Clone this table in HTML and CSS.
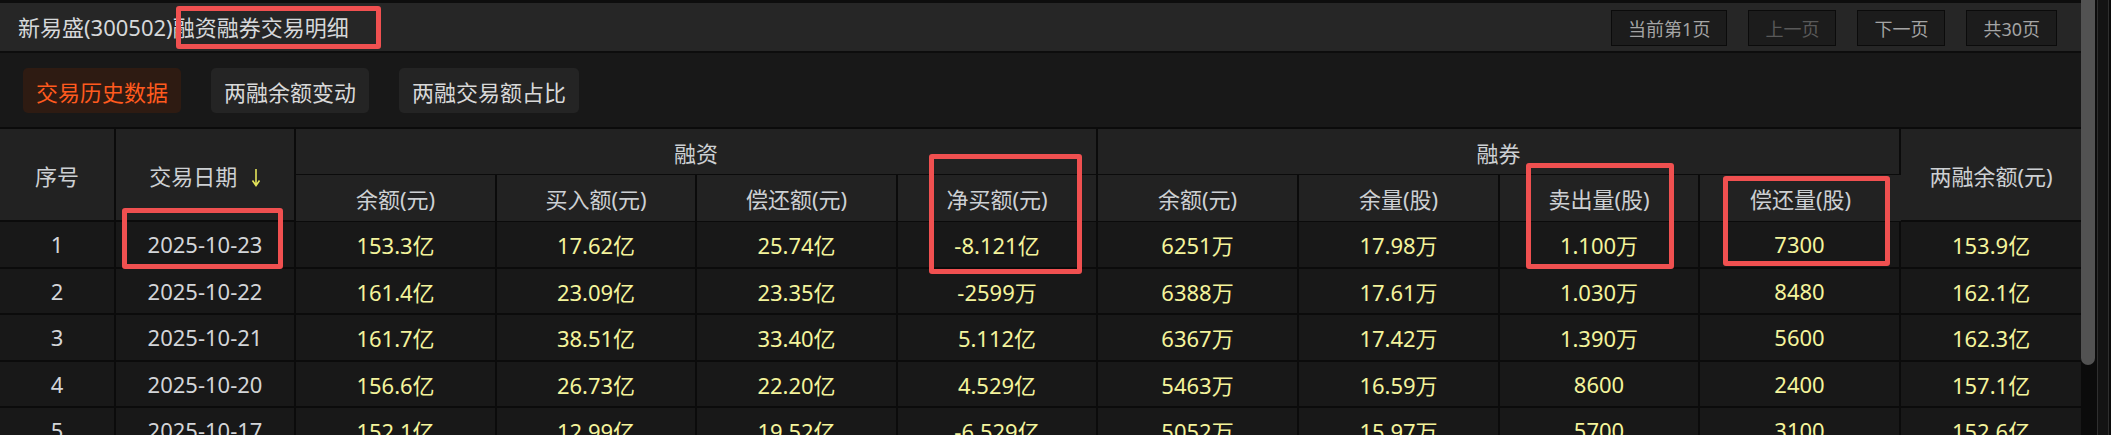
FILE: index.html
```html
<html>
    <head>
        <meta name="viewport" content="width=device-width, initial-scale=1.0">
        <link rel="stylesheet" href="styles.css">
    </head>
    <body>
        <div class="page">
            <div class="main">
                <div class="topbar">
                    <h1 class="title">新易盛(300502)融资融券交易明细</h1>
                    <div class="pager">
                        <span class="page-btn">当前第1页</span>
                        <span class="page-btn disabled">上一页</span>
                        <span class="page-btn">下一页</span>
                        <span class="page-btn">共30页</span>
                    </div>
                </div>
                <div class="tabs">
                    <span class="tab active">交易历史数据</span>
                    <span class="tab">两融余额变动</span>
                    <span class="tab">两融交易额占比</span>
                </div>
                <table class="grid">
                    <colgroup>
                        <col style="width:116px">
                        <col style="width:180px">
                        <col style="width:201px">
                        <col style="width:200px">
                        <col style="width:201px">
                        <col style="width:200px">
                        <col style="width:201px">
                        <col style="width:201px">
                        <col style="width:200px">
                        <col style="width:201px">
                        <col style="width:180px">
                    </colgroup>
                    <thead>
                        <tr class="head-top">
                            <th rowspan="2">序号</th>
                            <th rowspan="2" class="sortable">交易日期
                                <svg class="sort-arrow" width="10" height="19" viewBox="0 0 10 19">
                                    <path d="M5 1 V17 M1.5 12.5 L5 17.5 L8.5 12.5" fill="none" stroke="#e4e45a" stroke-width="1.6"/>
                                </svg>
                            </th>
                            <th colspan="4" class="group">融资</th>
                            <th colspan="4" class="group">融券</th>
                            <th rowspan="2">两融余额(元)</th>
                        </tr>
                        <tr class="head-sub">
                            <th>余额(元)</th>
                            <th>买入额(元)</th>
                            <th>偿还额(元)</th>
                            <th>净买额(元)</th>
                            <th>余额(元)</th>
                            <th>余量(股)</th>
                            <th>卖出量(股)</th>
                            <th>偿还量(股)</th>
                        </tr>
                    </thead>
                    <tbody>
                        <tr>
                            <td class="plain">1</td><td class="plain">2025-10-23</td>
                            <td>153.3亿</td><td>17.62亿</td><td>25.74亿</td><td>-8.121亿</td>
                            <td>6251万</td><td>17.98万</td><td>1.100万</td><td>7300</td><td>153.9亿</td>
                        </tr>
                        <tr>
                            <td class="plain">2</td><td class="plain">2025-10-22</td>
                            <td>161.4亿</td><td>23.09亿</td><td>23.35亿</td><td>-2599万</td>
                            <td>6388万</td><td>17.61万</td><td>1.030万</td><td>8480</td><td>162.1亿</td>
                        </tr>
                        <tr>
                            <td class="plain">3</td><td class="plain">2025-10-21</td>
                            <td>161.7亿</td><td>38.51亿</td><td>33.40亿</td><td>5.112亿</td>
                            <td>6367万</td><td>17.42万</td><td>1.390万</td><td>5600</td><td>162.3亿</td>
                        </tr>
                        <tr>
                            <td class="plain">4</td><td class="plain">2025-10-20</td>
                            <td>156.6亿</td><td>26.73亿</td><td>22.20亿</td><td>4.529亿</td>
                            <td>5463万</td><td>16.59万</td><td>8600</td><td>2400</td><td>157.1亿</td>
                        </tr>
                        <tr>
                            <td class="plain">5</td><td class="plain">2025-10-17</td>
                            <td>152.1亿</td><td>12.99亿</td><td>19.52亿</td><td>-6.529亿</td>
                            <td>5052万</td><td>15.97万</td><td>5700</td><td>3100</td><td>152.6亿</td>
                        </tr>
                    </tbody>
                </table>
            </div>
            <div class="vscroll"><div class="thumb"></div></div>
            <div class="edge"><div class="edge-inner"></div></div>
        </div>

        <!-- red markers drawn over the screenshot -->
        <div class="mark mark-title"></div>
        <div class="mark mark-date"></div>
        <div class="mark mark-net"></div>
        <div class="mark mark-sell"></div>
        <div class="mark mark-repay"></div>
    </body>
</html>
```

FILE: styles.css
```css
body {
    margin: 0;
    height: 435px;
    overflow: hidden;
    background: #181818;
    font-family: "Noto Sans", "Noto Sans CJK SC", sans-serif;
    position: relative;
}

div.page {
    display: flex;
    height: 435px;
}

div.main {
    width: 2081px;
    flex: none;
    background: #181818;
}

div.topbar {
    display: flex;
    align-items: center;
    justify-content: space-between;
    height: 48px;
    border-top: 3px solid #0d0d0d;
    border-bottom: 2px solid #0d0d0d;
    background: #262626;
}

h1.title {
    margin: 0 0 0 18px;
    font-size: 22px;
    font-weight: normal;
    color: #d6d8da;
    line-height: 1;
}

div.pager {
    display: flex;
    gap: 21px;
    margin-right: 24px;
    padding-top: 2px;
}

span.page-btn {
    display: flex;
    align-items: center;
    height: 34px;
    padding: 0 16px;
    border: 1px solid #0b0b0b;
    background: #1c1c1c;
    color: #a4a4a4;
    font-size: 18px;
}

span.page-btn.disabled {
    color: #595959;
}

div.tabs {
    display: flex;
    gap: 30px;
    padding: 15px 23px 14px;
    background: #181818;
}

span.tab {
    display: flex;
    align-items: center;
    height: 45px;
    padding: 0 13px;
    border-radius: 5px;
    background: #242424;
    color: #d8d8d8;
    font-size: 22px;
}

span.tab.active {
    background: #2e1b12;
    color: #ff5a1e;
}

table.grid {
    width: 2081px;
    table-layout: fixed;
    border-collapse: separate;
    border-spacing: 0;
    border-top: 2px solid #0b0b0b;
}

table.grid th,
table.grid td {
    padding: 0;
    text-align: center;
    font-size: 22px;
    font-weight: normal;
    border-right: 2px solid #0b0b0b;
    border-bottom: 2px solid #0b0b0b;
    white-space: nowrap;
}

table.grid th:last-child,
table.grid td:last-child {
    border-right: none;
}

table.grid th {
    background: #222222;
    color: #cdd0d3;
}

tr.head-top {
    height: 46px;
}

tr.head-top th.group {
    border-bottom: 1px solid #0b0b0b;
}

tr.head-sub {
    height: 47px;
}

tr.head-sub th {
    border-bottom-width: 1px;
}

table.grid tbody tr {
    height: 46.5px;
}

table.grid td {
    background: #181818;
    color: #f4f49c;
}

table.grid td.plain {
    color: #d3d5d8;
}

th.sortable .sort-arrow {
    margin-left: 8px;
    vertical-align: -2px;
}

div.vscroll {
    width: 15px;
    flex: none;
    background: #0b0b0b;
}

div.thumb {
    width: 14px;
    height: 365px;
    background: #525252;
    border-radius: 0 0 7px 7px;
}

div.edge {
    width: 15px;
    flex: none;
    box-sizing: border-box;
    padding: 0 2px 0 1px;
    background: #0b0b0b;
}

div.edge-inner {
    height: 100%;
    border-left: 1px solid #2f2f2f;
    border-right: 1px solid #2f2f2f;
    background: #131313;
}

div.mark {
    position: absolute;
    box-sizing: border-box;
    border: 5px solid #f05050;
    border-radius: 3px;
}

div.mark-title { left: 176px; top: 6px; width: 205px; height: 43px; }
div.mark-date { left: 122px; top: 208px; width: 161px; height: 61px; }
div.mark-net { left: 929px; top: 154px; width: 153px; height: 120px; }
div.mark-sell { left: 1526px; top: 163px; width: 148px; height: 106px; }
div.mark-repay { left: 1723px; top: 176px; width: 167px; height: 90px; }
```
